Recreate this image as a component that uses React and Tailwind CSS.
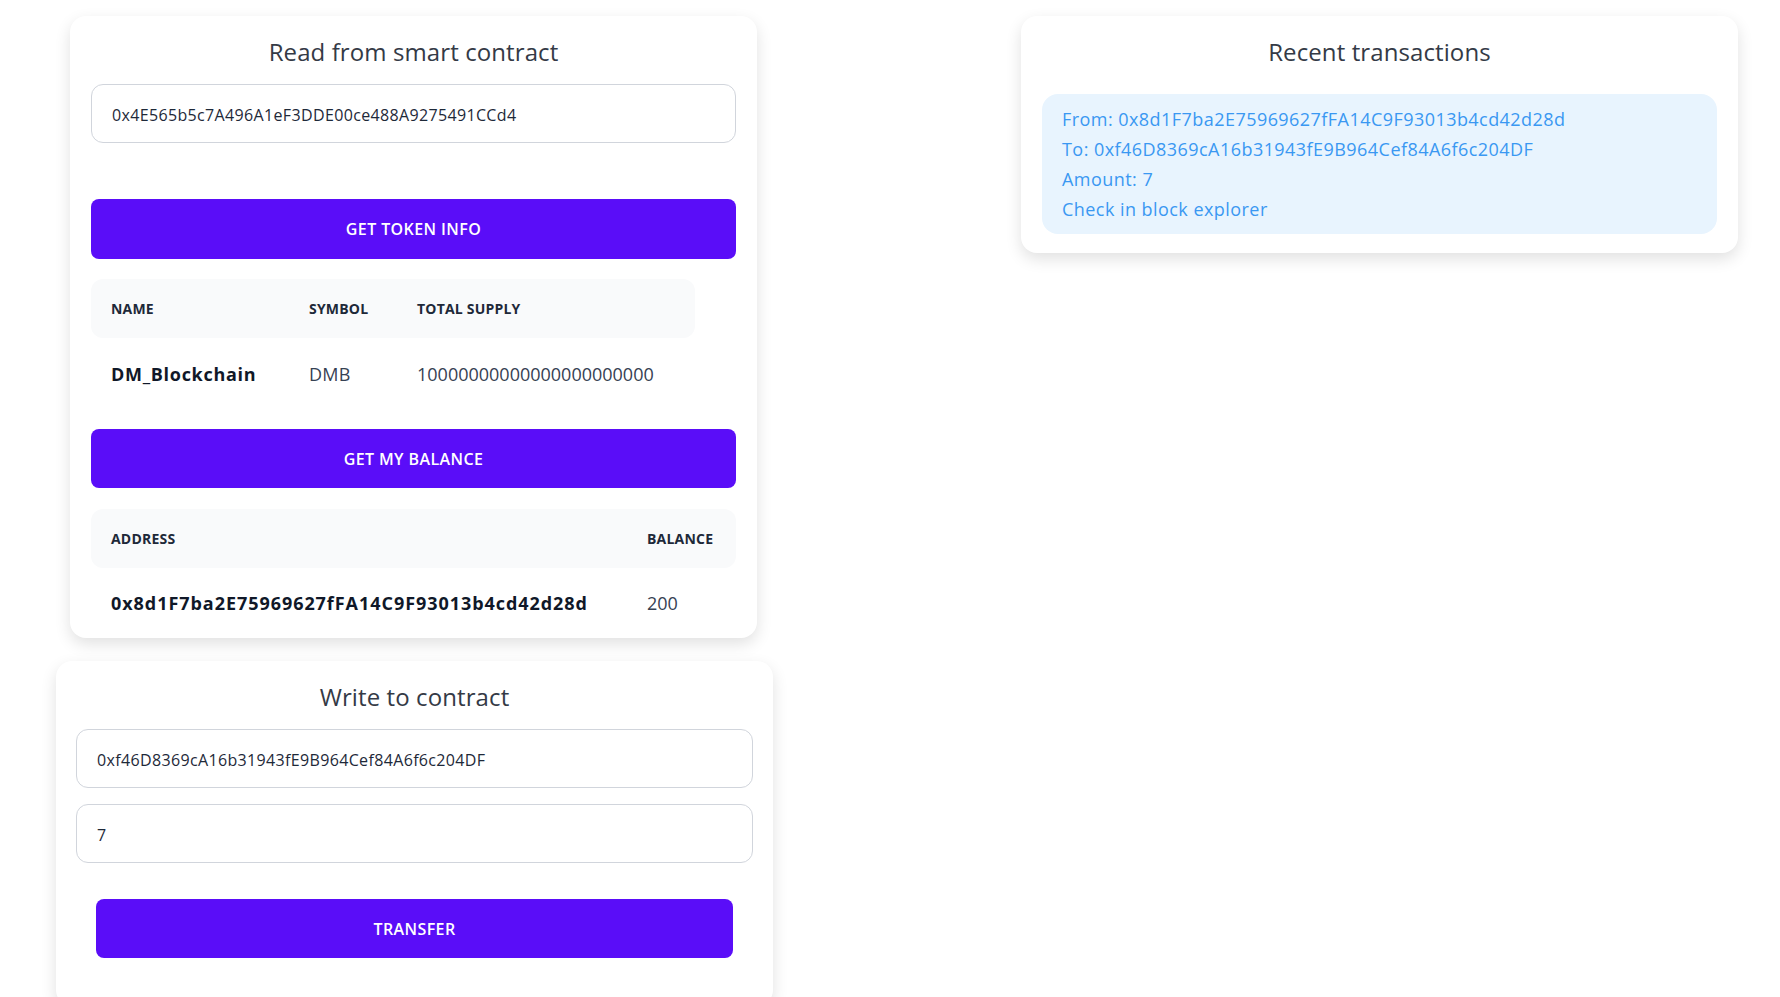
import { useState } from "react";

const contractAddress = "0x4E565b5c7A496A1eF3DDE00ce488A9275491CCd4";
const myAddress = "0x8d1F7ba2E75969627fFA14C9F93013b4cd42d28d";
const toAddress = "0xf46D8369cA16b31943fE9B964Cef84A6f6c204DF";

export default function App() {
  const [addr, setAddr] = useState(contractAddress);
  const [recipient, setRecipient] = useState(toAddress);
  const [amount, setAmount] = useState("7");

  const tokenInfo = {
    name: "DM_Blockchain",
    symbol: "DMB",
    totalSupply: "10000000000000000000000",
  };

  const txs = [{ from: myAddress, to: toAddress, amount: 7 }];

  return (
    <div
      className="flex min-h-screen justify-between bg-white pl-14 pr-[42px] pt-4 text-gray-800"
      style={{ fontFamily: '"Open Sans", "Noto Sans", sans-serif' }}
    >
      <div className="flex w-[717px] flex-col">
        <div className="ml-[14px] w-[687px] rounded-2xl bg-white px-[21px] pt-5 shadow-[0_6px_16px_rgba(0,0,0,0.12)]">
          <h2 className="text-center text-2xl leading-8 font-medium tracking-[0.1px] text-[#343a46]">
            Read from smart contract
          </h2>
          <input
            className="mt-4 h-[59px] w-full rounded-xl border border-gray-300 px-5 pt-[2px] text-base tracking-[0.35px] text-gray-800 outline-none"
            value={addr}
            onChange={(e) => setAddr(e.target.value)}
          />
          <button className="mt-14 h-[60px] w-full rounded-lg bg-[#5a0df8] text-base font-semibold tracking-[0.4px] text-white uppercase">
            Get token info
          </button>

          <table className="mt-5 w-[604px] table-fixed border-separate border-spacing-0 text-left">
            <thead>
              <tr className="text-sm font-bold tracking-[0.2px] text-gray-800 uppercase">
                <th className="h-[59px] w-[198px] rounded-l-xl bg-gray-50 px-5">Name</th>
                <th className="h-[59px] w-[108px] bg-gray-50 px-5">Symbol</th>
                <th className="h-[59px] w-[298px] rounded-r-xl bg-gray-50 px-5">Total supply</th>
              </tr>
            </thead>
            <tbody>
              <tr className="text-lg">
                <td className="h-[72px] px-5 font-bold tracking-[0.7px] text-gray-900">{tokenInfo.name}</td>
                <td className="h-[72px] px-5 tracking-[0.3px] text-gray-700">{tokenInfo.symbol}</td>
                <td className="h-[72px] px-5 text-gray-700">{tokenInfo.totalSupply}</td>
              </tr>
            </tbody>
          </table>

          <button className="mt-[19px] h-[59px] w-full rounded-lg bg-[#5a0df8] text-base font-semibold tracking-[0.4px] text-white uppercase">
            Get my balance
          </button>

          <table className="mt-[21px] w-full table-fixed border-separate border-spacing-0 text-left">
            <thead>
              <tr className="text-sm font-bold tracking-[0.2px] text-gray-800 uppercase">
                <th className="h-[59px] w-[536px] rounded-l-xl bg-gray-50 px-5">Address</th>
                <th className="h-[59px] rounded-r-xl bg-gray-50 px-5">Balance</th>
              </tr>
            </thead>
            <tbody>
              <tr className="text-lg">
                <td className="h-[70px] px-5 font-bold tracking-[0.95px] text-gray-900">{myAddress}</td>
                <td className="h-[70px] px-5 text-gray-700">200</td>
              </tr>
            </tbody>
          </table>
        </div>

        <div className="mt-[23px] w-[717px] rounded-2xl bg-white px-5 pt-5 pb-12 shadow-[0_6px_16px_rgba(0,0,0,0.12)]">
          <h2 className="text-center text-2xl leading-8 font-medium tracking-[0.1px] text-[#343a46]">
            Write to contract
          </h2>
          <input
            className="mt-4 h-[59px] w-full rounded-xl border border-gray-300 px-5 pt-[2px] text-base tracking-[0.35px] text-gray-800 outline-none"
            value={recipient}
            onChange={(e) => setRecipient(e.target.value)}
          />
          <input
            className="mt-4 h-[59px] w-full rounded-xl border border-gray-300 px-5 pt-[2px] text-base tracking-[0.35px] text-gray-800 outline-none"
            value={amount}
            onChange={(e) => setAmount(e.target.value)}
          />
          <div className="px-5">
            <button className="mt-9 h-[59px] w-full rounded-lg bg-[#5a0df8] text-base font-semibold tracking-[0.4px] text-white uppercase">
              Transfer
            </button>
          </div>
        </div>
      </div>

      <div className="w-[717px] self-start rounded-2xl bg-white px-[21px] pt-5 pb-[19px] shadow-[0_6px_16px_rgba(0,0,0,0.12)]">
        <h2 className="text-center text-2xl leading-8 font-medium tracking-[0.1px] text-[#343a46]">
          Recent transactions
        </h2>
        {txs.map((tx, i) => (
          <div
            key={i}
            className="mt-[26px] rounded-2xl bg-[#e8f4fe] px-5 py-[10px] text-lg leading-[30px] tracking-[0.45px] text-[#3a98f2]"
          >
            <p>From: {tx.from}</p>
            <p>To: {tx.to}</p>
            <p>Amount: {tx.amount}</p>
            <a href="#" className="block">
              Check in block explorer
            </a>
          </div>
        ))}
      </div>
    </div>
  );
}
